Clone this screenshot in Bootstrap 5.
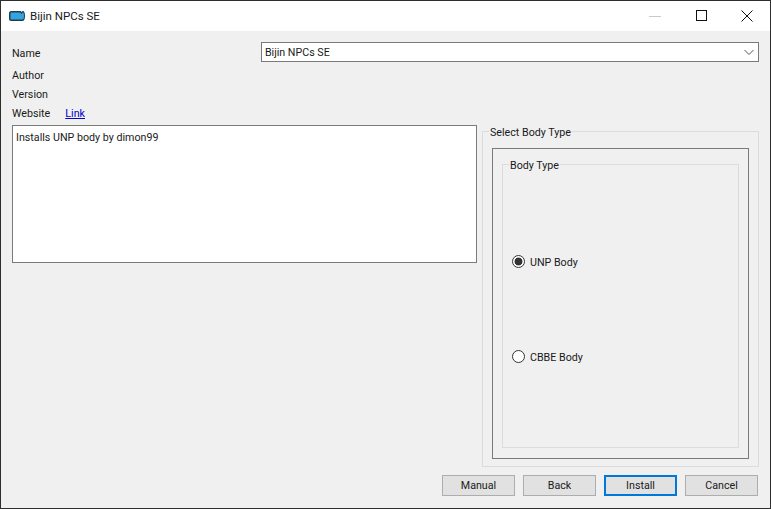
<!DOCTYPE html>
<html lang="en">
<head>
<meta charset="utf-8">
<title>Bijin NPCs SE</title>
<link href="https://cdn.jsdelivr.net/npm/bootstrap@5.3.0/dist/css/bootstrap.min.css" rel="stylesheet">
<style>
html,body{height:100%;margin:0;overflow:hidden}
body{background:#f0f0f0;font-family:Roboto,"Open Sans","Liberation Sans",sans-serif;font-size:10.7px;line-height:16px;color:#1a1a1a}
.win-frame{width:771px;height:509px;border:1px solid #2e2e2e}
.win-title{height:30px;background:#fff;padding-left:8px;font-size:11.5px}
.win-title .app-ico{margin-right:5px}
.win-ctl{width:46px;height:30px}
.win-body{height:477px;padding:11px 11px 12px 11px}
.f-label{width:54px}
.name-label{padding-top:4px}
.combo.form-select{width:499px;height:20px;margin-left:195px;padding:1px 0 0 3px;border:1px solid #7a7a7a;border-radius:0;font-size:10.7px;line-height:16px;color:#1a1a1a;background-color:#fff;background-position:right 4px center;background-size:10px 10px;box-shadow:none;font-family:inherit;background-image:url("data:image/svg+xml,%3csvg xmlns='http://www.w3.org/2000/svg' viewBox='0 0 10 10'%3e%3cpath fill='none' stroke='%23555' d='M.5 3 5 7.500 9.500 3'/%3e%3c/svg%3e")}
.row-name{height:20px;margin-bottom:3px}
.info-row{height:19px;padding-top:2px}
.info-link{margin-left:15px;color:#0000c8;text-decoration:underline}
.panes{gap:5px;margin-top:3px}
.desc-box{width:465px;height:138px;background:#fff;border:1px solid #7a7a7a;padding:4px 3px 3px;flex:none}
.grp-outer{width:277px;height:336px;margin-top:6px;border:1px solid #dcdcdc;padding:16px 9px 7px 9px;position:relative}
.grp-cap{position:absolute;top:-7px;background:#f0f0f0;padding:0 1px;white-space:nowrap}
.grp-outer>.grp-cap{left:6px}
.frame-box{height:311px;border:1px solid #7a7a7a;padding:15px 9px 10px 9px}
.grp-inner{height:284px;border:1px solid #dcdcdc;position:relative;padding:49px 9px 0 9px}
.grp-inner>.grp-cap{left:6px}
.radio-row{height:95px;margin:0;padding:0}
.radio-row .form-check-input{width:13px;height:13px;margin:0 5px 0 0;float:none;border:1px solid #333;border-radius:50%;background-color:#fff;box-shadow:none;flex:none}
.radio-row .form-check-input:checked{background-color:#fff;border-color:#333;background-image:radial-gradient(circle,#333 0,#333 3.6px,transparent 4.3px)}
.radio-row label{opacity:1;color:#1a1a1a;padding-top:2px}
.foot-row{margin-top:8px;gap:8px;padding-right:1px}
.dlg-btn.btn{width:73px;height:21px;padding:1px 0 0;border:1px solid #adadad;border-radius:0;background:#e1e1e1;color:#1a1a1a;font-size:10.7px;line-height:18px;font-family:inherit}
.dlg-btn.btn-default{border:2px solid #0078d7;line-height:16px}
</style>
</head>
<body>
<div class="win-frame d-flex flex-column">
  <div class="win-title d-flex align-items-center">
    <svg class="app-ico" width="16" height="12" viewBox="0 0 16 12"><path d="M2 1h9c.8 0 1.200.5 1.500 1C13 1.500 13.500 1 14 1c1 0 2 1.500 2 5s-1 5-2.500 5H2c-1 0-2-1-2-2V3c0-1 1-2 2-2z" fill="#1f3d55"/><path d="M2.500 2.500h8c.7 0 1.200.5 2 1.500.5-.8 1-1.500 1.500-1.500.7 0 1 1.500 1 3.500s-.5 3.500-1.500 3.500h-11c-.8 0-1-.5-1-1.500V4c0-1 .2-1.500 1-1.500z" fill="#35a3dc"/></svg>
    <span>Bijin NPCs SE</span>
    <div class="ms-auto d-flex">
      <div class="win-ctl d-flex align-items-center justify-content-center"><svg width="12" height="12" viewBox="0 0 12 12"><path d="M0 6.500h12" stroke="#c9c9c9" fill="none"/></svg></div>
      <div class="win-ctl d-flex align-items-center justify-content-center"><svg width="12" height="12" viewBox="0 0 12 12"><rect x="1.500" y=".5" width="10" height="10" fill="none" stroke="#111"/></svg></div>
      <div class="win-ctl d-flex align-items-center justify-content-center"><svg width="12" height="12" viewBox="0 0 12 12"><path d="M.5.5l11 11M11.500.5l-11 11" fill="none" stroke="#111"/></svg></div>
    </div>
  </div>
  <div class="win-body d-flex flex-column">
    <div class="row-name d-flex align-items-center">
      <span class="f-label name-label">Name</span>
      <select class="combo form-select"><option>Bijin NPCs SE</option></select>
    </div>
    <div class="info-row d-flex align-items-center"><span class="f-label">Author</span></div>
    <div class="info-row d-flex align-items-center"><span class="f-label">Version</span></div>
    <div class="info-row d-flex align-items-center"><span>Website</span><a class="info-link" href="#">Link</a></div>
    <div class="panes d-flex align-items-start">
      <div class="desc-box">Installs UNP body by dimon99</div>
      <div class="grp-outer">
        <span class="grp-cap">Select Body Type</span>
        <div class="frame-box">
          <div class="grp-inner">
            <span class="grp-cap">Body Type</span>
            <div class="form-check radio-row d-flex align-items-center">
              <input class="form-check-input" type="radio" name="body" id="r1" checked>
              <label class="form-check-label" for="r1">UNP Body</label>
            </div>
            <div class="form-check radio-row d-flex align-items-center">
              <input class="form-check-input" type="radio" name="body" id="r2">
              <label class="form-check-label" for="r2">CBBE Body</label>
            </div>
          </div>
        </div>
      </div>
    </div>
    <div class="foot-row d-flex justify-content-end">
      <button class="dlg-btn btn" type="button">Manual</button>
      <button class="dlg-btn btn" type="button">Back</button>
      <button class="dlg-btn btn btn-default" type="button">Install</button>
      <button class="dlg-btn btn" type="button">Cancel</button>
    </div>
  </div>
</div>
</body>
</html>
